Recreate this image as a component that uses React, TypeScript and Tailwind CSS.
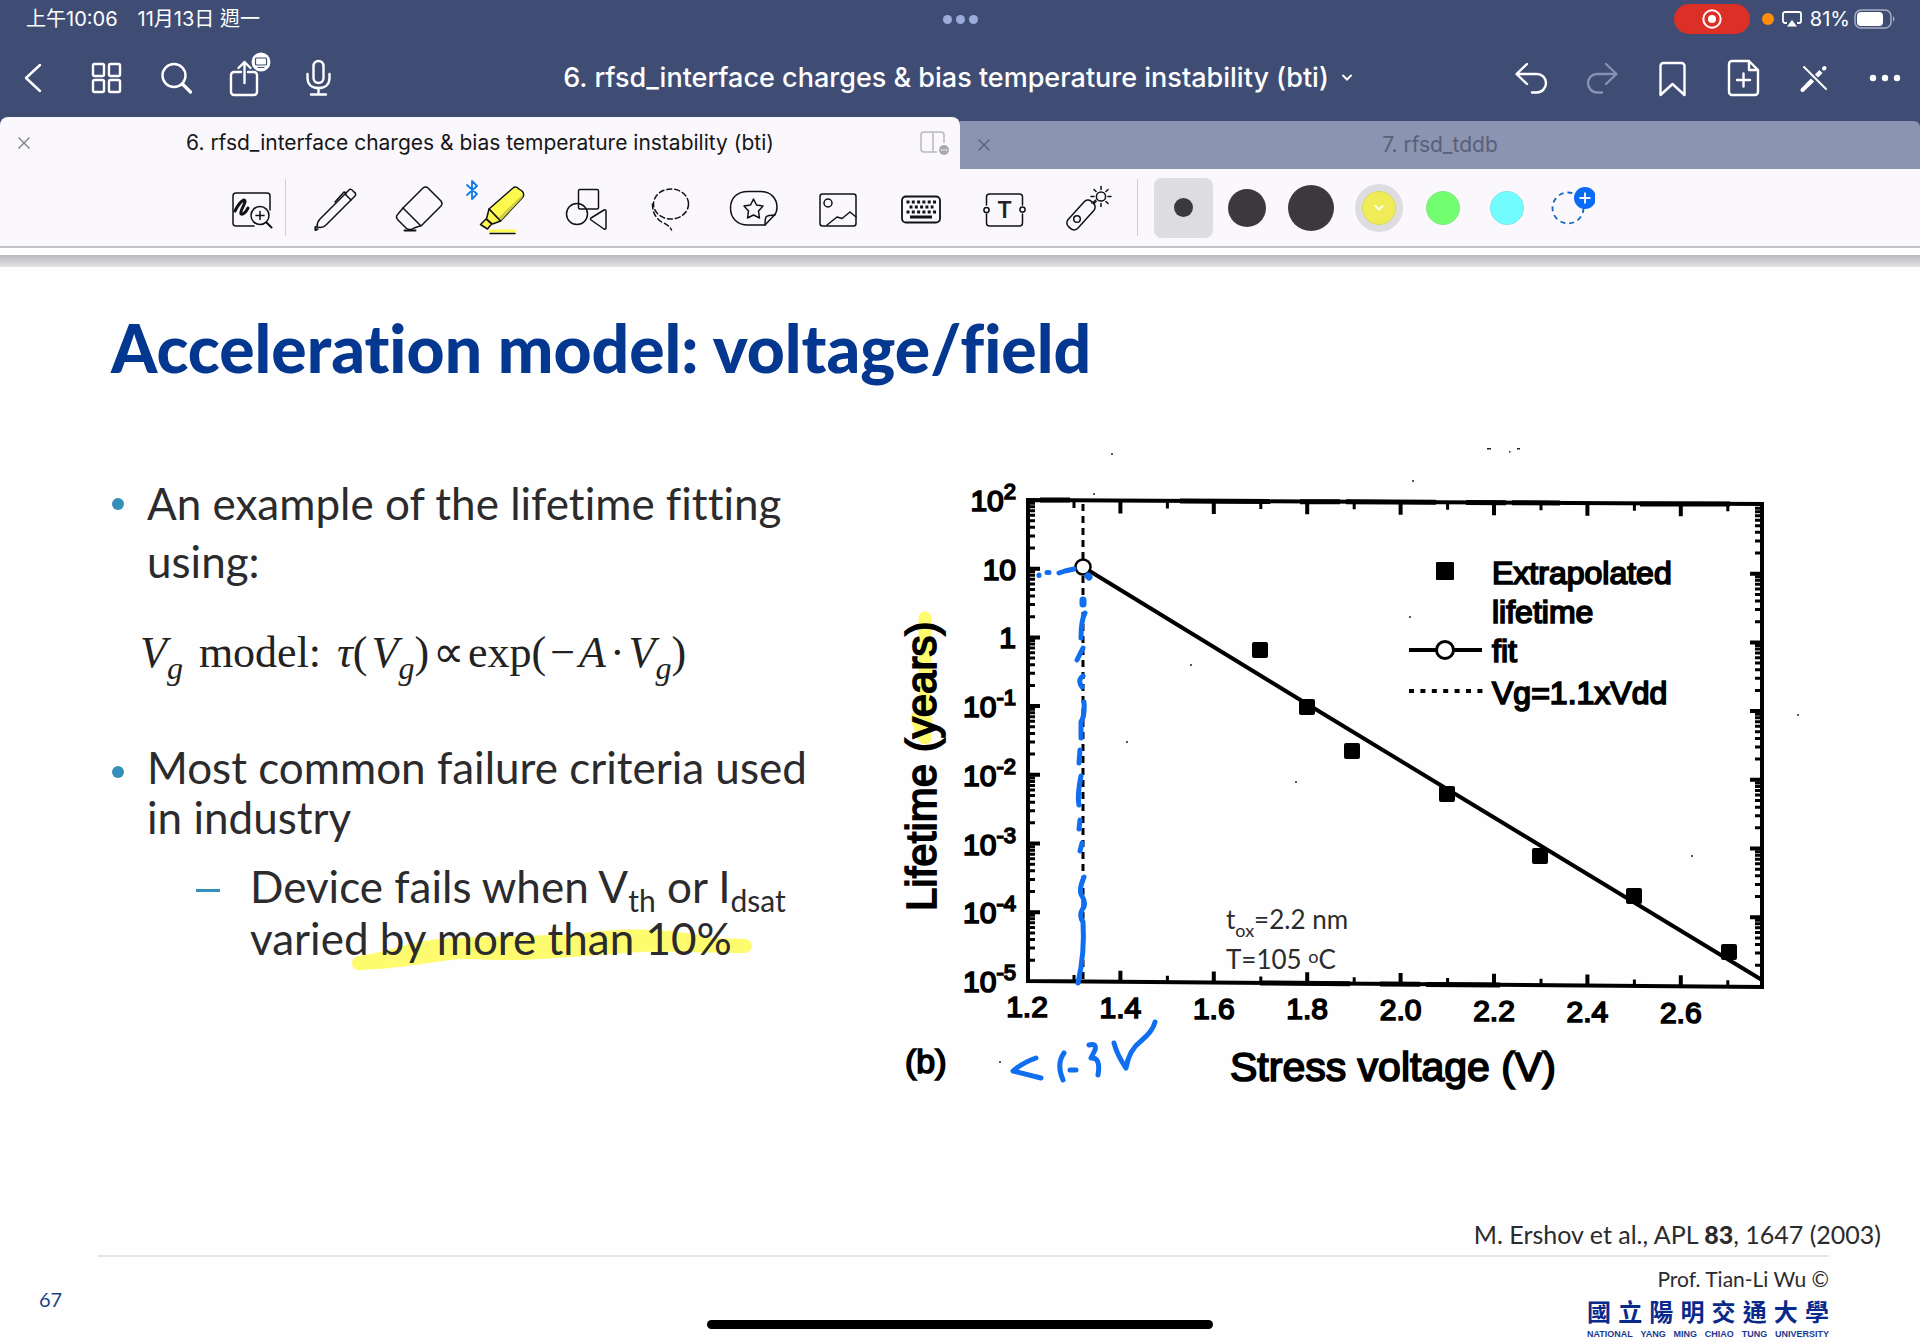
import type { ReactNode } from "react";

const ui = "font-['Inter','Noto_Sans_CJK_TC',sans-serif]";

function NavIcon({ children, label, wide }: { children: ReactNode; label: string; wide?: boolean }) {
  return (
    <button type="button" aria-label={label} className={`flex h-full items-center justify-center ${wide ? "w-[70px]" : "w-[71px]"}`}>
      <svg viewBox="0 0 40 40" className="size-10 overflow-visible" fill="none" stroke="currentColor" strokeWidth="2.4" strokeLinecap="round" strokeLinejoin="round">
        {children}
      </svg>
    </button>
  );
}

function Tool({ children, label }: { children: ReactNode; label: string }) {
  return (
    <button type="button" aria-label={label} className="flex items-center justify-center">
      <svg viewBox="0 0 48 48" className="size-12 overflow-visible" fill="none" stroke="#111" strokeWidth="1.5" strokeLinecap="round" strokeLinejoin="round">
        {children}
      </svg>
    </button>
  );
}

function StatusBar() {
  return (
    <div className="grid h-[38px] grid-cols-[1fr_auto_1fr] items-center text-xl leading-6">
      <div className="flex gap-5 pl-[26px]">
        <span>上午10:06</span>
        <span>11月13日 週一</span>
      </div>
      <div className="flex gap-1">
        <i className="size-[9px] rounded-full bg-[#9bacdc]" />
        <i className="size-[9px] rounded-full bg-[#9bacdc]" />
        <i className="size-[9px] rounded-full bg-[#9bacdc]" />
      </div>
      <div className="flex items-center justify-end pr-[24px]">
        <span className="mr-3 flex h-[30px] w-[76px] items-center justify-center rounded-full bg-[#dc2f26]">
          <svg viewBox="0 0 20 20" className="size-5" fill="none" stroke="#fff" strokeWidth="2">
            <circle cx="10" cy="10" r="8.7" />
            <circle cx="10" cy="10" r="4" fill="#fff" stroke="none" />
          </svg>
        </span>
        <i className="mr-2 size-3 rounded-full bg-[#ff8d0a]" />
        <svg viewBox="0 0 20 16" className="mr-2 h-4 w-5" fill="none" stroke="#fff" strokeWidth="1.8">
          <path d="M5 12H3a2 2 0 0 1-2-2V3a2 2 0 0 1 2-2h14a2 2 0 0 1 2 2v7a2 2 0 0 1-2 2h-2" />
          <path d="M10 9l5 6.500H5z" fill="#fff" stroke="none" />
        </svg>
        <span className="mr-1 text-xl leading-6">81%</span>
        <svg viewBox="0 0 42 20" className="h-5 w-[42px]" fill="none">
          <rect x="1" y="1" width="36" height="18" rx="6" stroke="#a9b0c6" strokeWidth="1.500" />
          <rect x="3" y="3" width="26" height="14" rx="4" fill="#fff" />
          <path d="M39 7q3 3 0 6z" fill="#a9b0c6" />
        </svg>
      </div>
    </div>
  );
}

function NavBar() {
  return (
    <nav className="grid h-[79px] grid-cols-[1fr_auto_1fr] items-center">
      <div className="flex h-full">
        <NavIcon label="Back" wide>
          <path d="M25 7L11 20l14 13" />
        </NavIcon>
        <NavIcon label="Thumbnails">
          <rect x="7" y="6" width="11" height="12" rx="1.500" />
          <rect x="23" y="6" width="11" height="12" rx="1.500" />
          <rect x="7" y="22" width="11" height="12" rx="1.500" />
          <rect x="23" y="22" width="11" height="12" rx="1.500" />
        </NavIcon>
        <NavIcon label="Search">
          <circle cx="17" cy="17.500" r="11.500" />
          <path d="M25.500 26l8 8" strokeWidth="3.200" />
        </NavIcon>
        <NavIcon label="Share">
          <path d="M13 14H6a3 3 0 0 0-3 3v17a3 3 0 0 0 3 3h20a3 3 0 0 0 3-3V17a3 3 0 0 0-3-3h-6" />
          <path d="M16.500 25V4M10.500 10l6-6 6 6" />
          <circle cx="33" cy="4" r="9.500" fill="#fff" stroke="none" />
          <rect x="27.500" y="0" width="11" height="7" rx="1" stroke="#3f4d74" strokeWidth="1.200" />
          <path d="M30 9.500h6" stroke="#3f4d74" strokeWidth="1.200" />
        </NavIcon>
        <NavIcon label="Record">
          <rect x="14.500" y="3" width="10" height="22" rx="5" />
          <path d="M8.500 16v4c0 6 4 10 11 10s11-4 11-10v-4M19.500 30v6M12 36.500h15" />
        </NavIcon>
      </div>
      <button type="button" className="flex items-center gap-3 pr-1 text-[27px] leading-8 font-medium whitespace-nowrap">
        6. rfsd_interface charges &amp; bias temperature instability (bti)
        <svg viewBox="0 0 12 8" className="h-2 w-3" fill="none" stroke="currentColor" strokeWidth="2" strokeLinecap="round">
          <path d="M2 1.500l4 4 4-4" />
        </svg>
      </button>
      <div className="flex h-full justify-end">
        <NavIcon label="Undo">
          <path d="M17 6L6.500 16 17 26M7 16h20c5 0 9 4 9 9s-4 9.500-9 9.500h-5" />
        </NavIcon>
        <NavIcon label="Redo">
          <g stroke="#8791b2">
            <path d="M25 6l10.500 10L25 26M35 16H16c-5 0-9 4-9 9s4 9.500 9 9.500h5" />
          </g>
        </NavIcon>
        <NavIcon label="Bookmark">
          <path d="M8.500 8a3 3 0 0 1 3-3h18a3 3 0 0 1 3 3v29l-12-11-12 11z" />
        </NavIcon>
        <NavIcon label="Add page">
          <path d="M6 6a3 3 0 0 1 3-3h17l9 9v22a3 3 0 0 1-3 3H9a3 3 0 0 1-3-3zM26 3v9h9M14 22h13M20.500 15.500v13" />
        </NavIcon>
        <NavIcon label="Stop editing">
          <path d="M10 9l22 22" strokeWidth="2" />
          <path d="M13 27.500l5.500-5.500M22.500 18l4.500-4.500" strokeWidth="4.500" strokeLinecap="butt" />
          <path d="M8.500 32l4-4M30 10.500l.5-.5" strokeWidth="4" />
        </NavIcon>
        <NavIcon label="More">
          <g fill="currentColor" stroke="none">
            <circle cx="8" cy="20" r="3.200" />
            <circle cx="20" cy="20" r="3.200" />
            <circle cx="32" cy="20" r="3.200" />
          </g>
        </NavIcon>
      </div>
    </nav>
  );
}

function CloseButton({ label }: { label: string }) {
  return (
    <button type="button" aria-label={label} className="flex w-12 items-center justify-center">
      <svg viewBox="0 0 14 14" className="size-[14px]" stroke="currentColor" strokeWidth="1.4">
        <path d="M1.500 1.500l11 11M12.500 1.500l-11 11" />
      </svg>
    </button>
  );
}

function Tabs() {
  return (
    <div className="flex h-[52px] items-end text-[21px] leading-6">
      <div className="flex h-full flex-1 rounded-t-lg bg-[#faf8fc] text-[#161618]">
        <span className="flex text-[#808085]"><CloseButton label="Close tab 6" /></span>
        <button type="button" className="flex-1 whitespace-nowrap">
          6. rfsd_interface charges &amp; bias temperature instability (bti)
        </button>
        <button type="button" aria-label="Split view" className="flex w-12 items-center justify-center">
          <svg viewBox="0 0 30 26" className="mr-1 h-[26px] w-[30px]" fill="none" stroke="#b9b8bd" strokeWidth="1.500">
            <path d="M25 13V5a3 3 0 0 0-3-3H5a3 3 0 0 0-3 3v14a3 3 0 0 0 3 3h13M14 2v20" />
            <circle cx="25" cy="20" r="5" fill="#a8a8ad" stroke="none" />
            <path d="M22 20h1.200M24.500 20h1.200M27 20h1.200" stroke="#fff" />
          </svg>
        </button>
      </div>
      <div className="flex h-12 flex-1 rounded-tr-md bg-[#8b94b0] text-[#596079]">
        <CloseButton label="Close tab 7" />
        <button type="button" className="flex-1 pr-12 whitespace-nowrap">7. rfsd_tddb</button>
      </div>
    </div>
  );
}

const rays = [0, 45, 90, 135, 180, 225, 270, 315];
const keyRows = [17, 22, 27];

function Toolbar() {
  return (
    <div className="flex h-[79px] items-stretch border-b-2 border-[#c3c2c7] bg-[#faf8fc] pl-[219px]">
      <div className="flex w-[66px] justify-center">
        <Tool label="Zoom window">
          <path d="M42 26V12a3 3 0 0 0-3-3H8a3 3 0 0 0-3 3v27a3 3 0 0 0 3 3h18" />
          <path d="M7 27c2-4 5-10 9-11 4 1-5 11-3 14 2 1 5-2 7-6" strokeWidth="3" />
          <circle cx="32" cy="31.500" r="9" />
          <path d="M28 31.500h8M32 27.500v8" />
          <path d="M38.500 38.500l5 5" strokeWidth="2" />
        </Tool>
      </div>
      <i className="my-[10px] w-px bg-[#cfced3]" />
      <div className="ml-[7px] grid w-[838px] grid-cols-10">
        <Tool label="Pen">
          <path d="M6 43c0-4 1-6 3-8l25-25 6 6-25 25c-2 2-5 3-9 2z" />
          <path d="M34 10l4-4c1-1 3-1 4 1l1 1c2 1 2 3 1 4l-4 4M24 18l9-10c2 0 2 1 2 2M5 46l2-1" />
          <path d="M4.500 43v3" strokeWidth="2.200" />
        </Tool>
        <Tool label="Eraser">
          <path d="M8 24L28 4a4 4 0 0 1 5 0l13 13a4 4 0 0 1 0 5L26 42z" />
          <path d="M8 24l-5 6c-2 2-2 4 0 6l8 8c2 2 6 2 8 0l6-2" />
          <path d="M9.500 46.500h11" strokeWidth="2" />
        </Tool>
        <Tool label="Highlighter">
          <path d="M11 25L35 4c2-2 4-1 6 1l3 2c2 2 2 4 1 6L22.500 37z" fill="#fdf94f" />
          <path d="M20 34L44 11c1 1 1 2 0 3L22.500 37z" fill="#d2cd44" stroke="none" />
          <path d="M11 25l11.500 12-8 3-6-5z" fill="#fdf94f" />
          <path d="M8 35l5.500 5-4 5-7-4.500z" fill="#fdf94f" />
          <path d="M12 47h25" stroke="#fdf94f" strokeWidth="3" />
          <path d="M12 49.500h25" strokeWidth="1.500" />
          <path d="M-11 1l10 9-5 5V-3l5 5-10 9" stroke="#0f7be6" strokeWidth="1.800" />
        </Tool>
        <Tool label="Shapes">
          <rect x="16.500" y="5.500" width="20" height="19.500" rx="1.500" />
          <circle cx="15" cy="30" r="10.500" />
          <path d="M29 34l13-8c1-.5 2 0 2 1v17c0 1-1 1.500-2 1l-13-9c-.7-.6-.7-1.400 0-2z" />
        </Tool>
        <Tool label="Lasso">
          <ellipse cx="25" cy="20" rx="17.500" ry="15" strokeDasharray="5 3" />
          <path d="M6.500 20c0 7 2 13 9 18 5 2 8 4 10 8" strokeDasharray="5 3" />
        </Tool>
        <Tool label="Stickers">
          <path d="M35 41H18C7 41 .5 34 .5 24S7 7.500 18 7.500h12c11 0 17 7 17 16 0 4-1 6-3 8z" />
          <path d="M35 41c0-3 0-6 1-8 2-2 5-2 9-2" />
          <path d="M23.500 15l3 6 6.500 1-4.500 5 1 7-6-3-6 3 1-7-4.500-5 6.500-1z" />
        </Tool>
        <Tool label="Image">
          <rect x="6" y="10" width="36" height="32" rx="2.500" />
          <circle cx="14" cy="19" r="4" />
          <path d="M13 41l10-8 5 1.500 8-6.500 6 5" />
        </Tool>
        <Tool label="Keyboard">
          <rect x="5" y="12.500" width="38" height="26" rx="4" strokeWidth="1.800" />
          {keyRows.map((y, i) => (
            <path key={y} d={i === 1 ? `M12.500 ${y + 1}h24` : `M9.500 ${y + 1}h30`} strokeWidth="3" strokeLinecap="butt" strokeDasharray="3 2.300" />
          ))}
          <path d="M13 33h22" strokeWidth="3" strokeLinecap="butt" />
        </Tool>
        <Tool label="Text box">
          <path d="M5.500 21v-8a3 3 0 0 1 3-3h30a3 3 0 0 1 3 3v8M5.500 30v9a3 3 0 0 0 3 3h30a3 3 0 0 0 3-3v-9" />
          <circle cx="5.500" cy="26" r="2.600" />
          <circle cx="41.500" cy="25.500" r="2.600" />
          <text x="23.500" y="34" textAnchor="middle" fill="#222" stroke="none" className="font-['Inter'] text-[23px] font-semibold">T</text>
        </Tool>
        <Tool label="Laser pointer">
          <rect x="-1" y="24.500" width="34" height="13" rx="5" transform="rotate(-48 16 31)" />
          <circle cx="12" cy="35" r="3.300" />
          <path d="M27 19l4-3" />
          <circle cx="36" cy="12.500" r="4.600" />
          {rays.map((a) => (
            <path key={a} d="M36 5.500v-3" transform={`rotate(${a} 36 12.500)`} />
          ))}
        </Tool>
      </div>
      <i className="my-[10px] ml-[6px] w-px bg-[#cfced3]" />
      <div className="ml-[13px] flex items-center">
        <button type="button" aria-label="Thin" className="flex w-16 justify-center">
          <span className="flex h-[60px] w-[59px] items-center justify-center rounded-lg bg-[#dddce1]">
            <i className="size-[19px] rounded-full bg-[#3b393c]" />
          </span>
        </button>
        <button type="button" aria-label="Medium" className="flex w-16 justify-center">
          <i className="size-[38px] rounded-full bg-[#3b393c]" />
        </button>
        <button type="button" aria-label="Thick" className="flex w-16 justify-center">
          <i className="size-[46px] rounded-full bg-[#3b393c]" />
        </button>
        <button type="button" aria-label="Yellow" className="ml-1 flex w-16 justify-center">
          <span className="flex size-12 items-center justify-center rounded-full bg-[#dddcdf]">
            <span className="flex size-[34px] items-center justify-center rounded-full border border-[#dcd95c] bg-[#f0ec58]">
              <svg viewBox="0 0 12 8" className="h-2 w-3" fill="none" stroke="#fff" strokeWidth="1.800">
                <path d="M2 1.500l4 4 4-4" />
              </svg>
            </span>
          </span>
        </button>
        <button type="button" aria-label="Green" className="flex w-16 justify-center">
          <i className="size-[34px] rounded-full border border-[#85e884] bg-[#71ff70]" />
        </button>
        <button type="button" aria-label="Cyan" className="flex w-16 justify-center">
          <i className="size-[34px] rounded-full border border-[#82e6ea] bg-[#71fdff]" />
        </button>
        <button type="button" aria-label="Add color" className="flex w-16 justify-center">
          <svg viewBox="0 0 48 48" className="size-12" fill="none">
            <circle cx="21" cy="24" r="15.500" stroke="#1766c0" strokeWidth="1.800" strokeDasharray="5 4" />
            <circle cx="38" cy="14" r="11" fill="#086bf5" />
            <path d="M38 8.500v11M32.500 14h11" stroke="#fff" strokeWidth="1.800" />
          </svg>
        </button>
      </div>
    </div>
  );
}

const xTicks = ["1.2", "1.4", "1.6", "1.8", "2.0", "2.2", "2.4", "2.6"];
const yTicks: [string, string][] = [["10", "2"], ["10", ""], ["1", ""], ["10", "-1"], ["10", "-2"], ["10", "-3"], ["10", "-4"], ["10", "-5"]];
const points = [[1260, 650], [1307, 707], [1352, 751], [1447, 794], [1540, 856], [1634, 896], [1729, 952]];
const minor = [2, 3, 4, 5, 6, 7, 8, 9];
const specks = [[1112, 454], [1413, 481], [1798, 715], [1692, 856], [1296, 782], [1000, 1062], [1191, 665], [1094, 494], [1127, 742], [1410, 617]];

function Chart() {
  const xAt = (i: number) => 1027 + i * 93.4;
  const yAt = (i: number) => 500 + i * 68.7;
  return (
    <svg viewBox="880 430 1040 680" className="w-full" role="img" aria-label="Lifetime in years against stress voltage">
      <path d="M925 618V738" stroke="#fffb6e" strokeWidth="13" strokeLinecap="round" />
      <path d="M917 718l6 18 3-14" stroke="#fffb6e" strokeWidth="13" strokeLinecap="round" strokeLinejoin="round" />

      <g stroke="#000" fill="none">
        <path d="M1028 981V500L1200 501L1762 504V987L1400 984Z" strokeWidth="4" />
        <path d="M1180 501l380 2M1040 500h30M1260 983l240 2M1640 504h120" strokeWidth="5" strokeDasharray="90 30 40 6" />
        {xTicks.map((t, i) => (
          <g key={t} strokeWidth="4">
            {i > 0 && <path d={`M${xAt(i)} ${981 + i * 0.75}v-11M${xAt(i)} ${501 + i * 0.45}v12`} />}
            <path d={`M${xAt(i) + 47} ${982 + i * 0.75}v-7M${xAt(i) + 47} ${501 + i * 0.45}v7`} strokeWidth="3" />
          </g>
        ))}
        {yTicks.map((_, i) => (
          <g key={i} strokeWidth="4">
            {i > 0 && i < 7 && <path d={`M1028 ${yAt(i)}h12M1762 ${yAt(i) + 5}h-12`} />}
            {i < 7 &&
              minor.map((m) => {
                const y = yAt(i + 1) - Math.log10(m) * 68.7;
                return <path key={m} d={`M1026 ${y}h9M1764 ${y + 5}h-9`} strokeWidth="3" />;
              })}
          </g>
        ))}
        <path d="M1083 504V979" strokeWidth="3" strokeDasharray="7 5" />
        <path d="M1083 567L1307 704L1447 789L1762 980" strokeWidth="4" />
        <circle cx="1083" cy="567" r="7.500" fill="#fff" strokeWidth="2.500" />
        <path d="M1409 650h73" strokeWidth="4" />
        <circle cx="1445" cy="650" r="8.500" fill="#fff" strokeWidth="3" />
        <path d="M1409 691h74" strokeWidth="4" strokeDasharray="5 6.400" />
      </g>
      {points.map(([x, y]) => (
        <rect key={x} x={x - 8} y={y - 8} width="16" height="16" rx="2" />
      ))}
      <rect x="1436" y="562" width="18" height="18" rx="1" />

      <g className="font-['Liberation_Sans',sans-serif] text-[30px]" stroke="#000" strokeWidth="1.700">
        {xTicks.map((t, i) => (
          <text key={t} x={xAt(i)} y={1017 + i * 0.8} textAnchor="middle">{t}</text>
        ))}
        {yTicks.map(([base, exp], i) => (
          <text key={i} x="1016" y={511 + i * 68.7} textAnchor="end">
            {base}
            {exp && <tspan dy="-12" className="text-[22px]">{exp}</tspan>}
          </text>
        ))}
        <g className="text-[32px]">
          <text x="1492" y="584">Extrapolated</text>
          <text x="1492" y="623">lifetime</text>
          <text x="1492" y="662">fit</text>
          <text x="1492" y="704">Vg=1.1xVdd</text>
        </g>
        <text x="905" y="1073" className="text-[34px]">(b)</text>
        <text x="1230" y="1081" className="text-[41px]">Stress voltage (V)</text>
        <text transform="translate(936 911) rotate(-90)" className="text-[42px]">Lifetime (years)</text>
      </g>
      <g className="font-['Lato',sans-serif] text-[26px]" fill="#2b2b2d">
        <text x="1226" y="929">t<tspan dy="8" className="text-[18px]">ox</tspan><tspan dy="-8">=2.2 nm</tspan></text>
        <text x="1226" y="969">T=105 <tspan dy="-6" className="text-[18px]">o</tspan><tspan dy="6">C</tspan></text>
      </g>

      <g fill="none" stroke="#0f6ff0" strokeWidth="5" strokeLinecap="round" strokeLinejoin="round">
        <path d="M1039 575v.5M1047 572.500h2M1059 573l6-2 9-2" />
        <path d="M1088 576l1 1M1083 600v4" strokeWidth="7" />
        <path d="M1085 613q-4 7-4 25M1083 648l-6 12M1083 676q-6 4-1 11M1084 702q1 14-3 20v16M1080 750l-1 13M1081 776q-4 20-2 29M1080 820l-1 9M1082 843l-2 8" />
        <path d="M1084 877q-6 14-2 19q5 8 0 14q-3 6 1 12q2 30-5 61" />
        <path d="M1036 1058Q1022 1063 1013 1071L1041 1078M1064 1053Q1056 1064 1063 1080M1070 1070h6M1089 1045q8-2 6 5l-4 8q10-1 7 17M1114 1043q3 12 12 25q3-18 15-27q12-10 14-19" />
      </g>

      <g fill="#222">
        {specks.map(([x, y]) => (
          <circle key={`${x}-${y}`} cx={x} cy={y} r="1" />
        ))}
        <path d="M1487 448h4v1.500h-4zM1517 448h3v1.500h-3zM1509 451h1.500v1.500H1509z" />
      </g>
    </svg>
  );
}

function Formula() {
  const g = <sub className="relative -bottom-[12px] align-baseline text-[32px] leading-none">g</sub>;
  return (
    <p className="mt-[38px] pl-7 font-['Liberation_Serif',serif] text-[44px] leading-[50px] whitespace-nowrap text-[#222]">
      <i>V{g}</i>
      <span className="ml-4">model:</span>
      <i className="ml-4">τ</i>(<i className="ml-1">V{g}</i>)
      <span className="mx-1">∝</span>exp(<span className="mr-1 ml-1">−</span><i>A</i>
      <span className="mx-1">·</span>
      <i>V{g}</i>)
    </p>
  );
}

function Bullet() {
  return <i className="mt-6 size-3 shrink-0 rounded-full bg-[#3390bb]" />;
}

function Slide() {
  return (
    <main className="relative bg-[#fefefe] pt-[45px] font-['Lato',sans-serif] text-[#2b2b2d] [font-variant-ligatures:none]">
      <h1 className="pl-[111px] text-[66px] leading-[72px] font-black whitespace-nowrap text-[#04378f]">
        Acceleration model: voltage/field
      </h1>
      <div className="mt-[46px] grid grid-cols-[11fr_13fr]">
        <div className="pt-11 pl-[112px] text-[44px] whitespace-nowrap">
          <div className="flex gap-[23px] leading-[58px]">
            <Bullet />
            <p>An example of the lifetime fitting<br />using:</p>
          </div>
          <Formula />
          <div className="mt-16 flex gap-[23px] leading-[50px]">
            <Bullet />
            <p>Most common failure criteria used<br />in industry</p>
          </div>
          <div className="relative isolate mt-[18px] flex gap-[30px] pl-[84px] leading-[52px]">
            <svg viewBox="354 930 400 40" className="absolute top-[71px] left-[242px] -z-10 h-10 w-[400px] overflow-visible" fill="#fffb6e" aria-hidden="true">
              <path d="M358 955C390 951 410 940 440 938C500 934 560 936 600 930C640 926 690 930 712 937L745 938Q752 939 752 945Q751 952 744 952C710 952 680 950 642 951C600 953 540 960 500 959C480 959 465 957 450 959C420 963 400 967 362 969Q353 970 352 963Q352 956 358 955Z" />
            </svg>
            <i className="mt-[29px] h-[3px] w-6 shrink-0 bg-[#3390bb]" />
            <p>
              Device fails when V<sub className="relative -bottom-[9px] align-baseline text-[30px] leading-none">th</sub> or I
              <sub className="relative -bottom-[9px] align-baseline text-[30px] leading-none">dsat</sub>
              <br />varied by more than 10%
            </p>
          </div>
        </div>
        <Chart />
      </div>

      <p className="mt-[106px] pr-[39px] text-right text-[25px] leading-9">
        M. Ershov et al., APL <b className="font-black">83</b>, 1647 (2003)
      </p>
      <footer className="mr-[91px] ml-[98px] mt-[3px] border-t-2 border-[#e6e6e9] pt-2">
        <div className="flex justify-between">
          <span className="-ml-[59px] pt-5 text-xl leading-7 text-[#1d4585]">67</span>
          <div className="text-right">
            <p className="text-[21px] leading-7">Prof. Tian-Li Wu ©</p>
            <div className="mt-1 flex w-[242px] justify-between font-['Noto_Sans_CJK_TC',sans-serif] text-2xl leading-7 font-bold text-[#0a2a8a]">
              {[..."國立陽明交通大學"].map((c) => (
                <span key={c}>{c}</span>
              ))}
            </div>
            <div className="mt-0.5 flex h-[14px] w-[242px] justify-between font-['Liberation_Sans',sans-serif] text-[9px] leading-[14px] font-bold text-[#1b3a8f]">
              {"NATIONAL YANG MING CHIAO TUNG UNIVERSITY".split(" ").map((w) => (
                <span key={w}>{w}</span>
              ))}
            </div>
          </div>
        </div>
      </footer>
      <div className="absolute bottom-3 left-1/2 h-[9px] w-[506px] -translate-x-1/2 rounded-full bg-black" />
    </main>
  );
}

export default function App() {
  return (
    <div className="min-h-screen overflow-hidden bg-[#fefefe]">
      <header className={`bg-[#3f4d74] text-white ${ui}`}>
        <StatusBar />
        <NavBar />
        <Tabs />
        <Toolbar />
      </header>
      <div className="h-[7px] bg-white" />
      <div className="h-3 bg-linear-to-b from-[#b9b8bb] to-[#e4e3e6]" />
      <Slide />
    </div>
  );
}
